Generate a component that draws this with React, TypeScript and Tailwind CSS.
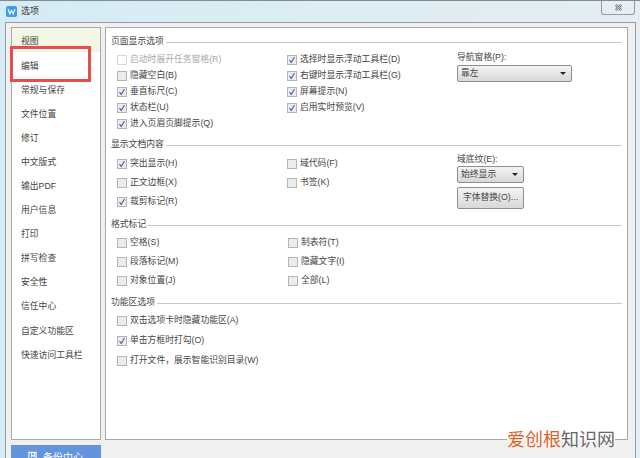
const font = "font-['Liberation_Sans','Noto_Sans_CJK_SC',sans-serif]";

const navItems = ['视图', '编辑', '常规与保存', '文件位置', '修订', '中文版式', '输出PDF', '用户信息', '打印', '拼写检查', '安全性', '信任中心', '自定义功能区', '快速访问工具栏'];

function Check({ label, checked, disabled }: { label: string; checked?: boolean; disabled?: boolean }) {
  return (
    <div className={`flex items-center gap-[3px] h-[16px] text-[8.8px] whitespace-nowrap ${disabled ? 'text-[#a8a8a8]' : 'text-[#444]'}`}>
      <span className={`w-[10px] h-[10px] flex items-center justify-center border ${disabled ? 'border-[#d8d8d8] bg-white' : 'border-[#b4b4b4] bg-[#ececec]'}`}>
        {checked && (
          <svg viewBox="0 0 10 10" className="w-[10px] h-[10px] shrink-0">
            <path d="M2.5 5L4.2 7.5L7.5 2" fill="none" stroke="#4a5aa8" strokeWidth="1.1" />
          </svg>
        )}
      </span>
      <span>{label}</span>
    </div>
  );
}

function Legend({ title }: { title: string }) {
  return (
    <div className="flex items-center gap-[2px] h-[14px] text-[8.8px] text-[#444] mr-[5px]">
      <span className="whitespace-nowrap">{title}</span>
      <div className="flex-1 h-[1px] bg-[#c8c8c8]" />
    </div>
  );
}

function Select({ label, className }: { label: string; className: string }) {
  return (
    <div className={`flex items-center justify-between pl-[3px] pr-[5px] rounded-[2px] border border-[#8e8e8e] bg-gradient-to-b from-[#f4f4f4] to-[#d8d8d8] text-[8.8px] text-[#444] ${className}`}>
      <span>{label}</span>
      <span className="w-0 h-0 border-x-[3px] border-x-transparent border-t-[3px] border-t-[#222]" />
    </div>
  );
}

export default function App() {
  return (
    <div className={`relative w-[640px] h-[458px] overflow-hidden bg-gradient-to-r from-[#d4ecf6] to-[#e4eef2] ${font}`}>
      {/* title bar */}
      <div className="flex items-center h-[22px] pl-[6px] pr-[5px] border-t border-[#8a8a8a]">
        <span className="w-[11px] h-[11px] rounded-[2px] bg-[#3d9bec] flex items-center justify-center">
          <svg viewBox="0 0 11 11" className="w-[11px] h-[11px]">
            <path d="M2 3L3.8 8L5.5 4.5L7.2 8L9 3" fill="none" stroke="#fff" strokeWidth="1.2" />
          </svg>
        </span>
        <span className="ml-[4px] text-[9px] text-[#333]">选项</span>
        <div className="ml-auto -mt-[7px] w-[34px] h-[14px] rounded-b-[3px] border border-t-0 border-[#9a9a9a] bg-[#e6eff3] flex items-center justify-center">
          <svg viewBox="0 0 10 10" className="w-[9px] h-[9px]">
            <path d="M2 2L8 8M8 2L2 8" fill="none" stroke="#777" strokeWidth="2.6" />
            <path d="M2 2L8 8M8 2L2 8" fill="none" stroke="#eee" strokeWidth="0.9" />
          </svg>
        </div>
      </div>

      {/* dialog body */}
      <div className="flex flex-col h-[436px] ml-[5px] mr-[4px] border-x border-t border-[#9a9a9a] bg-[#f0f0f0]">
        <div className="flex gap-[4px] pl-[5px] pr-[7px] pt-[4px] h-[417px] shrink-0">
          {/* left nav */}
          <div className="w-[90px] bg-white border border-[#a8a8a8] flex flex-col">
            {navItems.map((item, i) => (
              <div key={item} className={`h-[24.1px] pl-[9px] pt-[4px] flex items-center text-[8.8px] text-[#444] whitespace-nowrap ${i === 0 ? 'bg-[#f2f7e6]' : ''}`}>
                {item}
              </div>
            ))}
          </div>

          {/* right panel */}
          <div className="flex-1 bg-white border border-[#a8a8a8] pl-[5px] pt-[7px]">
            <Legend title="页面显示选项" />
            <div className="flex pl-[6px] pt-[3px] h-[89px]">
              <div className="w-[170px] flex flex-col">
                <Check label="启动时展开任务窗格(R)" disabled />
                <Check label="隐藏空白(B)" />
                <Check label="垂直标尺(C)" checked />
                <Check label="状态栏(U)" checked />
                <Check label="进入页眉页脚提示(Q)" checked />
              </div>
              <div className="w-[170px] flex flex-col">
                <Check label="选择时显示浮动工具栏(D)" checked />
                <Check label="右键时显示浮动工具栏(G)" checked />
                <Check label="屏幕提示(N)" checked />
                <Check label="启用实时预览(V)" checked />
              </div>
              <div className="flex flex-col -mt-[2px]">
                <div className="h-[15px] text-[8.8px] text-[#444] flex items-center">导航窗格(P):</div>
                <Select label="靠左" className="w-[115px] h-[17px]" />
              </div>
            </div>

            <Legend title="显示文档内容" />
            <div className="flex pl-[6px] pt-[4px] h-[66px]">
              <div className="w-[170px] flex flex-col gap-[3px]">
                <Check label="突出显示(H)" checked />
                <Check label="正文边框(X)" />
                <Check label="裁剪标记(R)" checked />
              </div>
              <div className="w-[170px] flex flex-col gap-[3px]">
                <Check label="域代码(F)" />
                <Check label="书签(K)" />
              </div>
              <div className="flex flex-col">
                <div className="h-[13px] -mt-[3px] text-[8.8px] text-[#444] flex items-center">域底纹(E):</div>
                <Select label="始终显示" className="w-[67px] h-[17px]" />
                <div className="mt-[4px] w-[67px] h-[22px] rounded-[2px] border border-[#8e8e8e] bg-gradient-to-b from-[#f4f4f4] to-[#d8d8d8] text-[8.8px] text-[#444] whitespace-nowrap flex items-center justify-center">
                  字体替换(O)...
                </div>
              </div>
            </div>

            <Legend title="格式标记" />
            <div className="flex pl-[6px] pt-[3px] h-[64px]">
              <div className="w-[171px] flex flex-col gap-[3px]">
                <Check label="空格(S)" />
                <Check label="段落标记(M)" />
                <Check label="对象位置(J)" />
              </div>
              <div className="flex flex-col gap-[3px]">
                <Check label="制表符(T)" />
                <Check label="隐藏文字(I)" />
                <Check label="全部(L)" />
              </div>
            </div>

            <Legend title="功能区选项" />
            <div className="flex flex-col gap-[4px] pl-[6px] pt-[3px]">
              <Check label="双击选项卡时隐藏功能区(A)" />
              <Check label="单击方框时打勾(O)" checked />
              <Check label="打开文件，展示智能识别目录(W)" />
            </div>
          </div>
        </div>

        {/* backup center */}
        <div className="mt-[5px] ml-[5px] w-[90px] h-[30px] bg-[#6495dc] flex items-start pt-[5px] pl-[16px] gap-[5px] text-[10px] text-white">
          <svg viewBox="0 0 12 12" className="w-[11px] h-[11px] mt-[1px]">
            <path d="M2 1.5H10V11H2Z M5 1.5V6L6.5 5L8 6V1.5" fill="none" stroke="#fff" strokeWidth="1.2" />
          </svg>
          <span>备份中心</span>
        </div>
      </div>

      {/* watermark */}
      <div className="absolute left-[507px] top-[430px] h-[10px] w-[108px] bg-white text-[18px] leading-[21px] whitespace-nowrap [text-shadow:0_0_2px_#fff,0_0_2px_#fff,0_0_2px_#fff]">
        <span className="text-[#d9622b]">爱创根</span>
        <span className="text-[#666]">知识网</span>
      </div>

      {/* red highlight */}
      <div className="absolute left-[10px] top-[46px] w-[81px] h-[36px] border-[3px] border-[#ea4b4b]" />
    </div>
  );
}
